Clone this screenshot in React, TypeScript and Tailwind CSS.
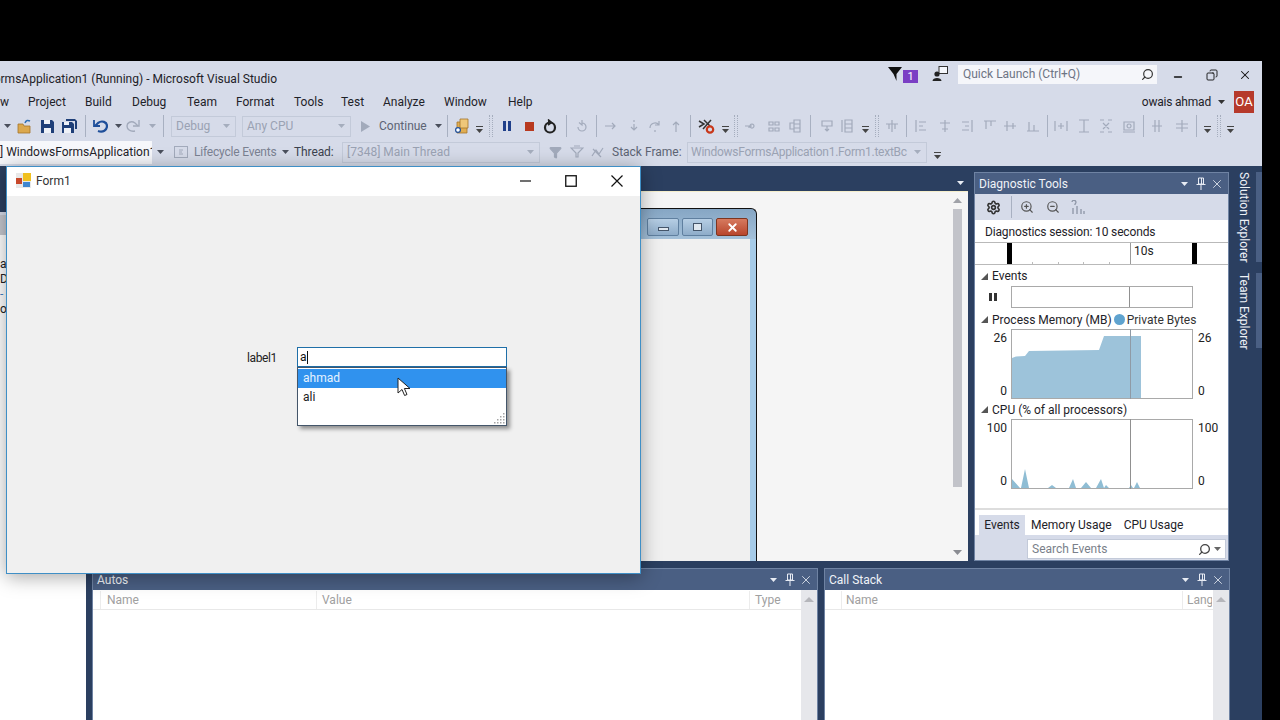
import React from "react";
import { Search, Settings, X, ZoomIn, ZoomOut, Minus, Copy, Filter } from "lucide-react";

const GRAY = "#a2aabb";

function Caret({ c = "#4a4f5c" }: { c?: string }) {
    return (
        <svg width="7" height="4" viewBox="0 0 7 4">
            <path d="M0 0h7L3.5 4z" fill={c} />
        </svg>
    );
}

function Overflow() {
    return (
        <svg width="7" height="8" viewBox="0 0 7 8" className="mt-[8px]">
            <path d="M0 0.5h7" stroke="#444" />
            <path d="M0 3h7L3.5 7z" fill="#444" />
        </svg>
    );
}

function Grip() {
    return <div className="w-[4px] h-[22px] border-x border-dotted border-[#a5adbd] shrink-0" />;
}

function Sep() {
    return <div className="w-px h-[22px] bg-[#a8b0c1] shrink-0" />;
}

function S({ className, children }: { className: string; children?: React.ReactNode }) {
    return <div className={`flex justify-center items-center shrink-0 ${className}`}>{children}</div>;
}

function G({ d, c = GRAY }: { d: string; c?: string }) {
    return (
        <svg width="14" height="14" viewBox="0 0 14 14" fill="none" stroke={c} strokeWidth="1.2">
            <path d={d} />
        </svg>
    );
}

function Combo({ className, text, textClass = "text-[#9aa2b3]" }: { className: string; text: string; textClass?: string }) {
    return (
        <div className={`h-[21px] border border-[#c3cad9] flex items-center justify-between pl-[4px] pr-[5px] shrink-0 overflow-hidden whitespace-nowrap ${className}`}>
            <span className={textClass}>{text}</span>
            <Caret c="#a5adbd" />
        </div>
    );
}

function PanelButtons() {
    return (
        <div className="flex items-center text-[#e8ecf4]">
            <Caret c="#e8ecf4" />
            <svg width="12" height="13" viewBox="0 0 12 13" fill="none" stroke="#e8ecf4" className="ml-[7px]">
                <path d="M3.5 1h5v6h-5zM6.5 1v6M1.5 7.5h9M6 8v5" />
            </svg>
            <X size={14} strokeWidth={1.4} className="ml-[3px]" />
        </div>
    );
}

function TitleRow() {
    return (
        <div className="h-[29px] flex items-center">
            <div className="w-[277px] flex justify-end overflow-hidden whitespace-nowrap text-[#1e2228] pt-[7px]">
                WindowsFormsApplication1 (Running) - Microsoft Visual Studio
            </div>
            <div className="ml-auto flex items-center">
                <svg width="14" height="14" viewBox="0 0 14 14" className="mt-[-3px]">
                    <path d="M0 0h14L8.5 7v7L5.5 7z" fill="#111" />
                </svg>
                <div className="w-[15px] h-[13px] ml-px bg-[#7b3fc4] text-white text-[11px] leading-[13px] text-center mt-[2px]">1</div>
                <svg width="16" height="16" viewBox="0 0 16 16" className="ml-[14px] mt-[-4px]">
                    <rect x="7" y="0.5" width="8.5" height="7" fill="#f4f6fb" stroke="#333" />
                    <circle cx="5" cy="8" r="2.6" fill="#222" />
                    <path d="M0.5 15c0-4 9-4 9 0z" fill="#222" />
                </svg>
                <div className="w-[199px] h-[19px] ml-[10px] mt-[-3px] bg-[#f5f6fa] flex items-center justify-between pl-[5px] pr-[3px] text-[#6d7484]">
                    Quick Launch (Ctrl+Q)
                    <Search size={13} strokeWidth={2.2} className="text-[#333] -scale-x-100" />
                </div>
                <S className="w-[34px] ml-[4px] mt-[-2px]"><Minus size={12} strokeWidth={2.6} className="text-[#111] mt-[4px]" /></S>
                <S className="w-[33px] mt-[-2px]"><Copy size={12} strokeWidth={1.8} className="text-[#111] -scale-x-100" /></S>
                <S className="w-[34px] mt-[-2px]"><X size={14} strokeWidth={1.8} className="text-[#111]" /></S>
            </div>
        </div>
    );
}

function MenuRow() {
    return (
        <div className="h-[24px] flex items-center text-[#1e2228] whitespace-nowrap">
            <div className="w-[28px]">w</div>
            <div className="w-[57px]">Project</div>
            <div className="w-[47px]">Build</div>
            <div className="w-[55px]">Debug</div>
            <div className="w-[49px]">Team</div>
            <div className="w-[58px]">Format</div>
            <div className="w-[47px]">Tools</div>
            <div className="w-[42px]">Test</div>
            <div className="w-[61px]">Analyze</div>
            <div className="w-[64px]">Window</div>
            <div>Help</div>
            <div className="ml-auto flex items-center">
                <span className="tracking-[-0.2px]">owais ahmad</span>
                <span className="ml-[7px]"><Caret c="#333" /></span>
                <div className="w-[20px] h-[22px] ml-[9px] mr-[8px] bg-[#b6392b] text-white text-[13px] leading-[22px] text-center">OA</div>
            </div>
        </div>
    );
}

function ToolbarOne() {
    return (
        <div className="h-[24px] flex items-center text-[12px] whitespace-nowrap">
            <S className="w-[14px]"><Caret /></S>
            <S className="w-[22px]">
                <svg width="16" height="15" viewBox="0 0 16 15">
                    <path d="M1 5h5l1 2h6v7H1z" fill="#dba84e" stroke="#a5742a" strokeWidth="0.8" />
                    <path d="M8 4c1-3 3-3 5-2" fill="none" stroke="#2f6fb5" strokeWidth="1.5" />
                </svg>
            </S>
            <S className="w-[22px]">
                <svg width="13" height="13" viewBox="0 0 13 13">
                    <path d="M0 0h11l2 2v11H0z" fill="#1f3f78" />
                    <path d="M3 0h6v4H3zM3 8h7v5H3z" fill="#eef1f7" />
                </svg>
            </S>
            <S className="w-[22px]">
                <svg width="15" height="14" viewBox="0 0 15 14">
                    <path d="M0 3h10l2 2v9H0z" fill="#1f3f78" />
                    <path d="M4 0h9l2 2v8h-2V2H4z" fill="#1f3f78" />
                    <path d="M2 3h5v3H2zM2 9h7v5H2z" fill="#eef1f7" />
                </svg>
            </S>
            <div className="ml-[5px]"><Sep /></div>
            <S className="w-[22px] ml-[3px]">
                <svg width="15" height="15" viewBox="0 0 15 15" fill="none" stroke="#1f4f9a" strokeWidth="2.2">
                    <path d="M5 12c5 2 9-1 9-5s-5-6-9-3L2 7" />
                    <path d="M1 1v6h6" strokeWidth="1.8" />
                </svg>
            </S>
            <S className="w-[14px]"><Caret /></S>
            <S className="w-[16px]">
                <svg width="14" height="14" viewBox="0 0 14 14" fill="none" stroke={GRAY} strokeWidth="1.4">
                    <path d="M9 12C4 13 1 10 1 7s4-6 8-3l3 3" />
                    <path d="M13 1v6H7" />
                </svg>
            </S>
            <S className="w-[22px]"><Caret c={GRAY} /></S>
            <Sep />
            <Combo className="w-[65px] ml-[7px]" text="Debug" />
            <Combo className="w-[109px] ml-[6px]" text="Any CPU" />
            <S className="w-[28px]">
                <svg width="9" height="11" viewBox="0 0 9 11"><path d="M0 0l9 5.5L0 11z" fill={GRAY} /></svg>
            </S>
            <div className="w-[52px] text-[#5d6474]">Continue</div>
            <S className="w-[14px]"><Caret /></S>
            <div className="ml-[2px]"><Sep /></div>
            <S className="w-[28px]">
                <svg width="16" height="16" viewBox="0 0 16 16">
                    <path d="M3 4h10v11H3z" fill="#e0ad52" stroke="#a5742a" strokeWidth="0.8" />
                    <path d="M6 1h8v9H6z" fill="#efc779" stroke="#a5742a" strokeWidth="0.8" />
                    <circle cx="4" cy="12" r="2.4" fill="#fff" stroke="#1f4f9a" strokeWidth="1.2" />
                </svg>
            </S>
            <S className="w-[7px]"><Overflow /></S>
            <div className="ml-[6px]"><Grip /></div>
            <S className="w-[28px]">
                <svg width="8" height="10" viewBox="0 0 8 10"><path d="M0 0h3v10H0zM5 0h3v10H5z" fill="#1f3f8a" /></svg>
            </S>
            <S className="w-[16px]"><div className="w-[9px] h-[9px] bg-[#b8391f]" /></S>
            <S className="w-[26px]">
                <svg width="14" height="15" viewBox="0 0 14 15" fill="none" stroke="#222" strokeWidth="2.2">
                    <circle cx="7" cy="8.5" r="5" />
                    <path d="M5 0.5l3.5 3L5 6" strokeWidth="1.6" fill="#222" />
                </svg>
            </S>
            <div className="ml-[3px]"><Sep /></div>
            <S className="w-[29px]"><G d="M3 8a4 4 0 1 0 4-4M7 1v5L4 3.5" /></S>
            <Sep />
            <S className="w-[28px]"><G d="M1 7h10M8 4l3 3-3 3" /></S>
            <S className="w-[18px]"><G d="M7 1v2M7 5v6M4 8l3 3 3-3" /></S>
            <S className="w-[24px]"><G d="M2 9a5 5 0 0 1 9-3M11 2v4H7M7 11v2" /></S>
            <S className="w-[18px]"><G d="M7 13V4M4 6l3-3 3 3M7 1v0" /></S>
            <div className="ml-[5px]"><Sep /></div>
            <S className="w-[30px]">
                <svg width="17" height="16" viewBox="0 0 17 16" fill="none">
                    <path d="M1 3l5 3-5 3M5 11L13 2" stroke="#333" strokeWidth="1.5" />
                    <path d="M6 2l6 6" stroke="#333" strokeWidth="1.5" />
                    <circle cx="12" cy="11.5" r="3.2" stroke="#c8371a" strokeWidth="2.2" />
                </svg>
            </S>
            <S className="w-[8px]"><Overflow /></S>
            <div className="ml-[5px]"><Grip /></div>
            <S className="w-[26px]"><G d="M1 7h7M10 7a2 2 0 1 0 0 .1M5 7v2" /></S>
            <S className="w-[20px]"><G d="M2 3h4v3H2zM8 3h4v3H8zM2 9h4v3H2zM8 9h4v3H8z" /></S>
            <S className="w-[24px]"><G d="M5 1h6v12H5zM1 4h4v6H1zM5 5h6M5 9h6" /></S>
            <div className="ml-[2px]"><Sep /></div>
            <S className="w-[22px] ml-[5px]"><G d="M2 2h10v5H2zM7 7v5M5 10l2 2 2-2" /></S>
            <S className="w-[18px]"><G d="M5 1h7v12H5zM2 1v12M5 5h7M5 9h7" /></S>
            <S className="w-[8px] ml-[5px]"><Overflow /></S>
            <div className="ml-[6px]"><Grip /></div>
            <S className="w-[26px]"><G d="M7 1v12M1 5h12M4 5v5M10 5v5" /></S>
            <div className="ml-px"><Sep /></div>
            <S className="w-[28px]"><G d="M2 1v12M5 3h7M5 7h4M5 11h7" /></S>
            <S className="w-[20px]"><G d="M7 1v12M2 4h10M4 10h6" /></S>
            <S className="w-[24px]"><G d="M12 1v12M2 3h7M5 7h4M2 11h7" /></S>
            <S className="w-[22px]"><G d="M1 2h12M3 2v8M8 2v5" /></S>
            <S className="w-[18px]"><G d="M1 7h12M4 2v10M10 4v6" /></S>
            <S className="w-[28px]"><G d="M1 12h12M3 3v9M8 6v6" /></S>
            <Sep />
            <S className="w-[26px]"><G d="M1 2v10M13 2v10M4 7h6M7 4v6" /></S>
            <S className="w-[20px]"><G d="M2 1h10M2 13h10M7 1v12" /></S>
            <S className="w-[24px]"><G d="M1 1h4M9 1h4M1 13h4M9 13h4M4 4l6 6M10 4l-6 6" /></S>
            <S className="w-[22px]"><G d="M2 3h10v8H2zM7 5a2 2 0 1 0 .1 0M1 13h12" /></S>
            <div className="ml-[3px]"><Sep /></div>
            <S className="w-[26px]"><G d="M5 1v12M9 1v12M2 7h10" /></S>
            <S className="w-[24px]"><G d="M1 5h12M1 9h12M7 1v12" /></S>
            <div className="ml-[2px]"><Sep /></div>
            <S className="w-[20px]"><Overflow /></S>
            <Grip />
            <S className="w-[18px]"><Overflow /></S>
        </div>
    );
}

function ToolbarTwo() {
    return (
        <div className="h-[28px] flex items-center text-[12px] whitespace-nowrap">
            <div className="w-[152px] h-[23px] bg-[#f6f7fb] overflow-hidden leading-[23px] text-[#1e2228] shrink-0">] WindowsFormsApplication1</div>
            <S className="w-[16px]"><Caret /></S>
            <S className="w-[26px]">
                <svg width="14" height="14" viewBox="0 0 14 14" fill="none" stroke={GRAY}>
                    <rect x="0.5" y="1.5" width="13" height="11" />
                    <path d="M5 5h4M5 7h3M5 9h4" />
                </svg>
            </S>
            <div className="w-[87px] text-[#7b8292] shrink-0 tracking-[-0.2px]">Lifecycle Events</div>
            <S className="w-[9px]"><Caret /></S>
            <div className="w-[52px] pl-[4px] text-[#3c424e] shrink-0 tracking-[-0.1px]">Thread:</div>
            <Combo className="w-[198px]" text="[7348] Main Thread" />
            <S className="w-[30px]"><Filter size={13} className="text-[#a2aabb]" fill="#a2aabb" /></S>
            <S className="w-[14px]"><G d="M1 3h12L8 8v4H6V8zM4 1h6" /></S>
            <S className="w-[28px]"><G d="M1 11L5 5l3 4 4-6M2 4l8 8" /></S>
            <div className="w-[74px] text-[#5d6474] shrink-0">Stack Frame:</div>
            <Combo className="w-[240px] ml-px" text="WindowsFormsApplication1.Form1.textBc" textClass="text-[#9aa2b3] tracking-[-0.25px] -ml-px" />
            <S className="w-[20px]"><Overflow /></S>
        </div>
    );
}

function LeftPanel() {
    return (
        <div className="w-[86px] shrink-0 bg-white flex flex-col text-[#222]">
            <div className="h-[46px] bg-[#2b3f60]" />
            <div className="h-[3px] bg-[#d6dbe9]" />
            <div className="h-[20px] bg-[#c5c7ce]" />
            <div className="pt-[22px] leading-[15px]">
                <div>a</div>
                <div>Di</div>
                <div className="text-[#3f7fc4]">-</div>
                <div>o</div>
            </div>
        </div>
    );
}

function DesignerForm() {
    return (
        <div className="flex-1 pl-[8px] pr-[191px] pt-[16px] flex">
            <div className="flex-1 border border-b-0 border-[#111] rounded-tr-[6px] bg-gradient-to-b from-[#86a6c4] to-[#b0cbe2] to-[12%] flex flex-col">
                <div className="h-[30px] flex justify-end gap-[3px] pr-[8px] pt-[9px] shrink-0">
                    <div className="w-[32px] h-[18px] border border-[#5f7f9f] rounded-[2px] bg-gradient-to-b from-[#b6cee4] to-[#8eacc9] flex items-center justify-center">
                        <div className="w-[11px] h-[4px] mt-[4px] bg-[#dfe7ef] border border-[#44556a]" />
                    </div>
                    <div className="w-[31px] h-[18px] border border-[#5f7f9f] rounded-[2px] bg-gradient-to-b from-[#b6cee4] to-[#8eacc9] flex items-center justify-center">
                        <div className="w-[9px] h-[8px] bg-[#dfe7ef] border border-[#44556a]" />
                    </div>
                    <div className="w-[32px] h-[18px] border border-[#7d3520] rounded-[2px] bg-gradient-to-b from-[#d67a5f] to-[#b8452c] flex items-center justify-center">
                        <X size={13} strokeWidth={3.4} className="text-white" />
                    </div>
                </div>
                <div className="flex-1 flex">
                    <div className="flex-1 bg-[#f0f0f0]" />
                    <div className="w-[6px] bg-[#a6cbe8]" />
                </div>
            </div>
        </div>
    );
}

function DocArea() {
    return (
        <div className="flex-1 flex flex-col">
            <div className="h-[25px] flex items-center justify-end pr-[4px] pt-[9px]">
                <Caret c="#e8ecf4" />
            </div>
            <div className="flex-1 flex bg-[#f5f5f5] border-t border-[#f5eecb] min-h-0">
                <DesignerForm />
                <div className="w-[18px] flex flex-col items-center pt-[6px] pb-[6px] mr-[2px]">
                    <svg width="9" height="5" viewBox="0 0 9 5"><path d="M0 5h9L4.5 0z" fill="#a0a2a8" /></svg>
                    <div className="w-[9px] h-[278px] mt-[6px] bg-[#c2c3c9]" />
                    <svg width="9" height="5" viewBox="0 0 9 5" className="mt-auto"><path d="M0 0h9L4.5 5z" fill="#8a8c92" /></svg>
                </div>
            </div>
        </div>
    );
}

function MemoryChart() {
    return (
        <svg width="182" height="70" viewBox="0 0 182 70" className="block">
            <path d="M1 69V29L5 27.5L14 27L18 22L88 21L93 7H130V69Z" fill="#9dc3da" />
            <rect x="0.5" y="0.5" width="181" height="69" fill="none" stroke="#a9a9a9" />
            <path d="M119.5 0V70" stroke="#8f9aa5" />
        </svg>
    );
}

function CpuChart() {
    return (
        <svg width="182" height="70" viewBox="0 0 182 70" className="block">
            <path d="M1 69V60L9 69H10L14 50L18 69H37L41 66L45 69H58L62 60L65 69H70L75 63L80 69H85L90 60L93 69L95 66L98 69H118L120 66L122 69H123L126 63L129 69Z" fill="#8fbdd4" />
            <rect x="0.5" y="0.5" width="181" height="69" fill="none" stroke="#a9a9a9" />
            <path d="M119.5 0V70" stroke="#909090" />
        </svg>
    );
}

function SectionTitle({ h, children }: { h: string; children: React.ReactNode }) {
    return (
        <div className={`flex items-center text-[#1e2228] whitespace-nowrap ${h}`}>
            <svg width="7" height="7" viewBox="0 0 7 7" className="ml-[6px] mr-[4px] shrink-0"><path d="M7 0v7H0z" fill="#555" /></svg>
            {children}
        </div>
    );
}

function ChartRow({ top, bottom, children }: { top: string; bottom: string; children: React.ReactNode }) {
    return (
        <div className="flex h-[70px] text-[#222]">
            <div className="w-[36px] pr-[4px] flex flex-col justify-between items-end pt-[2px] pb-px leading-[14px]">
                <div>{top}</div>
                <div>{bottom}</div>
            </div>
            {children}
            <div className="flex flex-col justify-between pl-[5px] pt-[2px] pb-px leading-[14px]">
                <div>{top}</div>
                <div>{bottom}</div>
            </div>
        </div>
    );
}

function DiagnosticTools() {
    return (
        <div className="w-[255px] shrink-0 mt-[6px] border border-[#6f83a3] bg-white flex flex-col">
            <div className="h-[21px] bg-[#4a5f83] flex items-center justify-between pl-[4px] pr-[4px] text-[#f0f3f8]">
                Diagnostic Tools
                <PanelButtons />
            </div>
            <div className="h-[26px] bg-[#d6dbe9] flex items-center">
                <S className="w-[36px]"><Settings size={15} strokeWidth={2.6} className="text-[#333]" /></S>
                <Sep />
                <S className="w-[28px] ml-[1px]"><ZoomIn size={14} className="text-[#555]" /></S>
                <S className="w-[24px]"><ZoomOut size={14} className="text-[#555]" /></S>
                <S className="w-[26px]">
                    <svg width="14" height="14" viewBox="0 0 14 14" fill="none" stroke="#8d95a6" strokeWidth="1.3">
                        <path d="M2 14V8M6 14V6M10 14V9M13 14v-3M1 2a2 2 0 1 1 3 2v1" />
                    </svg>
                </S>
            </div>
            <div className="h-[22px] pl-[10px] pt-px flex items-center text-[#1e2228] whitespace-nowrap tracking-[-0.15px]">Diagnostics session: 10 seconds</div>
            <div className="h-[23px] border-y border-[#b9b9b9] flex">
                <div className="w-[32px]" />
                <div className="w-[5px] bg-black" />
                <div className="w-[118px] flex justify-between items-end px-[20px]">
                    <div className="w-px h-[2px] bg-[#bbb]" />
                    <div className="w-px h-[2px] bg-[#bbb]" />
                    <div className="w-px h-[2px] bg-[#bbb]" />
                    <div className="w-px h-[2px] bg-[#bbb]" />
                </div>
                <div className="w-[62px] border-l border-[#9a9a9a] pl-[3px] leading-[16px] text-[#222]">10s</div>
                <div className="w-[5px] bg-black" />
            </div>
            <SectionTitle h="h-[21px] pt-[1px]">Events</SectionTitle>
            <div className="flex h-[22px]">
                <S className="w-[36px]">
                    <svg width="8" height="8" viewBox="0 0 8 8"><path d="M0 0h3v8H0zM5 0h3v8H5z" fill="#333" /></svg>
                </S>
                <div className="w-[182px] border border-[#a9a9a9] flex">
                    <div className="w-[118px] border-r border-[#909090]" />
                </div>
            </div>
            <SectionTitle h="h-[21px] pt-[2px]">
                Process Memory (MB)
                <div className="w-[11px] h-[11px] rounded-full bg-[#5fa3cf] mx-[2px] shrink-0" />
                <span className="text-[#333]">Private Bytes</span>
            </SectionTitle>
            <ChartRow top="26" bottom="0"><MemoryChart /></ChartRow>
            <SectionTitle h="h-[20px] pt-[1px]">CPU (% of all processors)</SectionTitle>
            <ChartRow top="100" bottom="0"><CpuChart /></ChartRow>
            <div className="h-[19px]" />
            <div className="h-[2px] bg-[#dddddd]" />
            <div className="h-[5px]" />
            <div className="h-[20px] flex items-center text-[#1e2228] whitespace-nowrap">
                <div className="w-[46px] h-full ml-[4px] bg-[#d6dbe9] text-center leading-[20px]">Events</div>
                <div className="ml-[6px]">Memory Usage</div>
                <div className="ml-[12px]">CPU Usage</div>
            </div>
            <div className="flex-1 bg-[#d6dbe9] flex items-center pl-[52px] pr-[2px] pt-[3px]">
                <div className="flex-1 h-[20px] bg-white border border-[#c3cad9] flex items-center justify-between pl-[4px] pr-[4px] text-[#7a7f8a]">
                    Search Events
                    <div className="flex items-center gap-[3px]">
                        <Search size={13} strokeWidth={2.4} className="text-[#444] -scale-x-100" />
                        <Caret c="#666" />
                    </div>
                </div>
            </div>
        </div>
    );
}

function GridHeader({ first, children }: { first: string; children: React.ReactNode }) {
    return (
        <div className="h-[20px] flex border-b border-[#e8e8e8] text-[#a0a0a0] whitespace-nowrap leading-[19px] pt-px">
            <div className={`border-r border-[#ececec] shrink-0 ${first}`} />
            {children}
        </div>
    );
}

function ScrollStub() {
    return (
        <div className="w-[16px] shrink-0 bg-[#e6e7eb] flex justify-center pt-[7px]">
            <svg width="10" height="5" viewBox="0 0 10 5"><path d="M0 5h10L5 0z" fill="#b5b6bb" /></svg>
        </div>
    );
}

function Autos() {
    return (
        <div className="w-[726px] border border-b-0 border-[#6f83a3] flex flex-col bg-white">
            <div className="h-[21px] bg-[#4a5f83] flex items-center justify-between pl-[4px] pr-[4px] text-[#f0f3f8]">
                Autos
                <PanelButtons />
            </div>
            <div className="flex-1 flex">
                <div className="flex-1">
                    <GridHeader first="w-[8px]">
                        <div className="w-[216px] pl-[6px] border-r border-[#ececec]">Name</div>
                        <div className="w-[433px] pl-[5px] border-r border-[#ececec]">Value</div>
                        <div className="pl-[5px]">Type</div>
                    </GridHeader>
                </div>
                <ScrollStub />
            </div>
        </div>
    );
}

function CallStack() {
    return (
        <div className="w-[406px] border border-b-0 border-[#6f83a3] flex flex-col bg-white">
            <div className="h-[21px] bg-[#4a5f83] flex items-center justify-between pl-[4px] pr-[4px] text-[#f0f3f8]">
                Call Stack
                <PanelButtons />
            </div>
            <div className="flex-1 flex">
                <div className="flex-1 min-w-0">
                    <GridHeader first="w-[17px]">
                        <div className="w-[341px] pl-[4px] border-r border-[#ececec]">Name</div>
                        <div className="w-[29px] pl-[4px] overflow-hidden">Lang</div>
                    </GridHeader>
                </div>
                <ScrollStub />
            </div>
        </div>
    );
}

function VerticalTabs() {
    return (
        <div className="w-[30px] shrink-0 flex flex-col pt-[6px] gap-[11px] text-[#eef1f7] whitespace-nowrap">
            <div className="h-[90px] flex justify-between">
                <div className="[writing-mode:vertical-rl] w-[24px] flex items-center leading-[24px]">Solution Explorer</div>
                <div className="w-[6px] bg-[#4a5f83]" />
            </div>
            <div className="h-[75px] flex justify-between">
                <div className="[writing-mode:vertical-rl] w-[24px] flex items-center leading-[24px]">Team Explorer</div>
                <div className="w-[6px] bg-[#4a5f83]" />
            </div>
        </div>
    );
}

function Form1Window() {
    return (
        <div className="absolute left-[6px] top-[166px] w-[635px] h-[408px] border border-[#3f8fc6] bg-[#f0f0f0] shadow-[0_3px_18px_rgba(0,0,0,0.35)] flex flex-col text-[#222]">
            <div className="h-[29px] bg-white flex items-center pl-[9px] pb-[2px] shrink-0">
                <svg width="15" height="15" viewBox="0 0 15 15">
                    <rect x="0" y="0" width="15" height="15" fill="#e8e8e8" />
                    <rect x="7" y="0" width="8" height="8" fill="#f0c020" />
                    <rect x="0" y="5" width="6" height="6" fill="#c8482a" />
                    <rect x="7" y="9" width="7" height="5" fill="#3f86cf" />
                </svg>
                <span className="ml-[5px] text-[#333]">Form1</span>
                <div className="ml-auto flex items-center">
                    <S className="w-[46px]">
                        <svg width="11" height="2" viewBox="0 0 11 2"><path d="M0 1h11" stroke="#111" strokeWidth="1.2" /></svg>
                    </S>
                    <S className="w-[46px]">
                        <svg width="12" height="12" viewBox="0 0 12 12" fill="none"><rect x="0.75" y="0.75" width="10.5" height="10.5" stroke="#111" strokeWidth="1.3" /></svg>
                    </S>
                    <S className="w-[46px]">
                        <svg width="12" height="12" viewBox="0 0 12 12" fill="none"><path d="M0.5 0.5l11 11M11.5 0.5l-11 11" stroke="#111" strokeWidth="1.2" /></svg>
                    </S>
                </div>
            </div>
            <div className="flex-1 pl-[240px] pt-[151px]">
                <div className="flex items-start">
                    <div className="w-[50px] pt-[2px] text-[#222] tracking-[-0.4px]">label1</div>
                    <div className="relative w-[210px]">
                        <div className="h-[20px] border border-[#1f6fa8] bg-white pl-[2px] leading-[18px] text-[#111] flex items-center">
                            a
                            <div className="w-px h-[13px] bg-[#111]" />
                        </div>
                        <div className="absolute left-0 top-full w-[210px] h-[59px] border border-[#44566a] bg-white shadow-[3px_3px_4px_rgba(0,0,0,0.4)] pt-px">
                            <div className="h-[19px] bg-[#3092ee] text-[#e6f2ff] pl-[5px] leading-[19px]">ahmad</div>
                            <div className="h-[19px] pl-[5px] leading-[19px] text-[#222]">ali</div>
                            <svg width="12" height="12" viewBox="0 0 12 12" className="absolute right-px bottom-px">
                                <path d="M10 1h1.5v1.5H10zM7 4h1.5v1.5H7zM10 4h1.5v1.5H10zM4 7h1.5v1.5H4zM7 7h1.5v1.5H7zM10 7h1.5v1.5H10zM1 10h1.5v1.5H1zM4 10h1.5v1.5H4zM7 10h1.5v1.5H7zM10 10h1.5v1.5H10z" fill="#a5a5a5" />
                            </svg>
                        </div>
                        <svg width="15" height="21" viewBox="0 0 15 21" className="absolute left-[100px] top-[30px]">
                            <path d="M1 1v15l4-3.5 2.6 6 2.4-1-2.6-6H13z" fill="#fff" stroke="#222" strokeWidth="1" />
                        </svg>
                    </div>
                </div>
            </div>
        </div>
    );
}

export default function App() {
    return (
        <div className="w-[1280px] h-[720px] bg-black overflow-hidden relative font-['Roboto','Liberation_Sans',sans-serif] text-[12px]">
            <div className="h-[61px]" />
            <div className="w-[1262px] h-[659px] flex flex-col">
                <div className="h-[105px] bg-[#d6dbe9] shrink-0">
                    <TitleRow />
                    <MenuRow />
                    <ToolbarOne />
                    <ToolbarTwo />
                </div>
                <div className="flex-1 bg-[#2b3f60] flex min-h-0">
                    <LeftPanel />
                    <div className="w-[1146px] shrink-0 pl-[6px] flex flex-col">
                        <div className="h-[395px] flex gap-[6px] pr-[3px] shrink-0">
                            <DocArea />
                            <DiagnosticTools />
                        </div>
                        <div className="flex-1 flex gap-[6px] mt-[7px] min-h-0">
                            <Autos />
                            <CallStack />
                        </div>
                    </div>
                    <VerticalTabs />
                </div>
            </div>
            <Form1Window />
        </div>
    );
}
